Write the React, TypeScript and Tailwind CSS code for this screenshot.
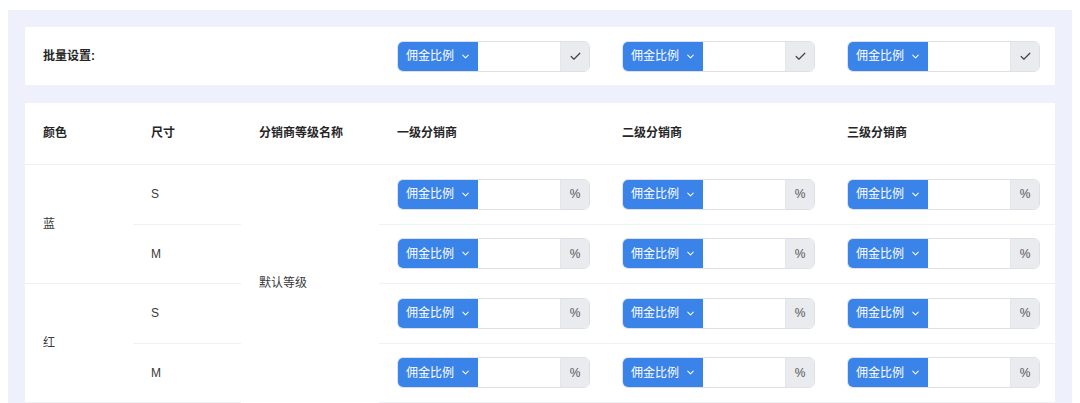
import React from "react";
import { ChevronDown, Check } from "lucide-react";

const font = { fontFamily: '"Liberation Sans", "Noto Sans CJK SC", "Noto Sans", sans-serif' };

function Group({ addon }: { addon: "check" | "pct" }) {
  return (
    <div className="flex h-[31px] w-[193px] rounded-[6px] border border-[#dde1e7] overflow-hidden">
      <div className="flex w-[80px] items-center bg-[#3a83e8] pl-[8px] text-[12px] text-white">
        <span>佣金比例</span>
        <ChevronDown size={11} strokeWidth={2.2} className="ml-[6px]" />
      </div>
      <div className="w-[83px] bg-white border-r border-[#e3e6ea]" />
      <div className="flex flex-1 items-center justify-center bg-[#e9ebee] text-[12px] text-[#555]">
        {addon === "check" ? <Check size={13} strokeWidth={2.2} className="text-[#444]" /> : "%"}
      </div>
    </div>
  );
}

export default function App() {
  const td = "pl-[18px] align-middle";
  const rowB = "border-b border-[#eff1f4]";
  return (
    <div className="bg-white px-[8px] pt-[10px]" style={font}>
      <div className="bg-[#eef1fc] px-[17px] pt-[17px]">
        <div className="grid h-[58px] grid-cols-[354px_225px_225px_1fr] items-center bg-white pl-[18px]">
          <div className="text-[12px] font-semibold text-[#262626]">批量设置:</div>
          <Group addon="check" />
          <Group addon="check" />
          <Group addon="check" />
        </div>
        <div className="mt-[18px] bg-white">
          <table className="w-full table-fixed border-collapse text-[12px] text-[#3a3a3a]">
            <colgroup>
              <col className="w-[108px]" />
              <col className="w-[108px]" />
              <col className="w-[138px]" />
              <col className="w-[225px]" />
              <col className="w-[225px]" />
              <col />
            </colgroup>
            <thead>
              <tr className={`h-[61px] ${rowB} text-left text-[#262626]`}>
                <th className={`${td} font-semibold`}>颜色</th>
                <th className={`${td} font-semibold`}>尺寸</th>
                <th className={`${td} font-semibold`}>分销商等级名称</th>
                <th className={`${td} font-semibold`}>一级分销商</th>
                <th className={`${td} font-semibold`}>二级分销商</th>
                <th className={`${td} font-semibold`}>三级分销商</th>
              </tr>
            </thead>
            <tbody>
              <tr className={`h-[60px] ${rowB}`}>
                <td rowSpan={2} className={`${td} ${rowB}`}>蓝</td>
                <td className={`${td} ${rowB}`}>S</td>
                <td rowSpan={4} className={td}>默认等级</td>
                <td className={`${td} ${rowB}`}><Group addon="pct" /></td>
                <td className={`${td} ${rowB}`}><Group addon="pct" /></td>
                <td className={`${td} ${rowB}`}><Group addon="pct" /></td>
              </tr>
              <tr className="h-[59px]">
                <td className={`${td} ${rowB}`}>M</td>
                <td className={`${td} ${rowB}`}><Group addon="pct" /></td>
                <td className={`${td} ${rowB}`}><Group addon="pct" /></td>
                <td className={`${td} ${rowB}`}><Group addon="pct" /></td>
              </tr>
              <tr className="h-[60px]">
                <td rowSpan={2} className={`${td} ${rowB}`}>红</td>
                <td className={`${td} ${rowB}`}>S</td>
                <td className={`${td} ${rowB}`}><Group addon="pct" /></td>
                <td className={`${td} ${rowB}`}><Group addon="pct" /></td>
                <td className={`${td} ${rowB}`}><Group addon="pct" /></td>
              </tr>
              <tr className="h-[59px]">
                <td className={`${td} ${rowB}`}>M</td>
                <td className={`${td} ${rowB}`}><Group addon="pct" /></td>
                <td className={`${td} ${rowB}`}><Group addon="pct" /></td>
                <td className={`${td} ${rowB}`}><Group addon="pct" /></td>
              </tr>
            </tbody>
          </table>
        </div>
      </div>
    </div>
  );
}
